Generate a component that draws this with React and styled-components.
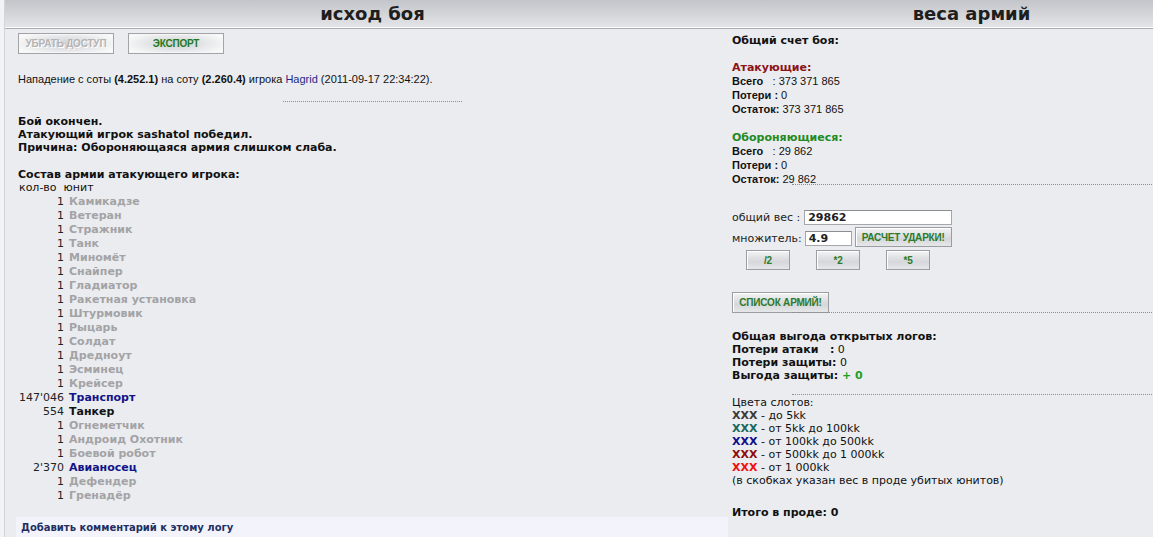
import React from "react";
import styled, { createGlobalStyle } from "styled-components";

const Global = createGlobalStyle`
  html, body { margin: 0; padding: 0; overflow: hidden; }
  body { background: #ebecef; width: 1153px; height: 537px; }
  #root { height: 537px; }
`;

const verdana = `"DejaVu Sans", Verdana, sans-serif`;
const arial = `"Liberation Sans", Arial, sans-serif`;

const Page = styled.div`
  display: flex;
  height: 537px;
  width: 1210px;
`;

const Strip = styled.div`
  width: 4px;
  flex: none;
  background: #f3f3f7;
  border-right: 1px solid #d4d5db;
`;

const Main = styled.div`
  flex: 1;
  display: flex;
  flex-direction: column;
`;

const HeaderRow = styled.div`
  display: grid;
  grid-template-columns: 735px 463px;
  height: 27px;
  background: linear-gradient(#c3c5ca, #e3e4e7);
  border-bottom: 1px solid #ffffff;
  box-shadow: 0 1px 0 #a9abb1;
`;

const HeaderCell = styled.div`
  font-family: ${verdana};
  font-weight: bold;
  font-size: 18px;
  color: #1e1e1e;
  text-align: center;
  line-height: 27px;
`;

const Body = styled.div`
  flex: 1;
  display: grid;
  grid-template-columns: 712px 471px;
  column-gap: 4px;
  padding-left: 11px;
  padding-top: 2px;
`;

const Column = styled.div`
  display: flex;
  flex-direction: column;
`;

const ButtonRow = styled.div`
  display: flex;
  gap: ${(p) => p.$gap || 14}px;
  margin: ${(p) => p.$margin || "0"};
  align-items: center;
`;

const Btn = styled.button`
  width: ${(p) => p.$w}px;
  height: ${(p) => p.$h || 21}px;
  padding: 0;
  border: 1px solid #a3a4a8;
  background: radial-gradient(ellipse 60% 70% at center, #cfd0d3 0%, #e2e3e5 45%, #fbfbfb 100%);
  font-family: ${arial};
  font-weight: bold;
  font-size: 10px;
  letter-spacing: -0.2px;
  color: ${(p) => (p.disabled ? "#b4b4b4" : "#1f7a1f")};
  text-shadow: ${(p) => (p.disabled ? "1px 1px 0 #fff" : "none")};
  box-shadow: inset 0 0 0 1px #f6f6f6;
`;

const SmallBtn = styled(Btn)`
  background: linear-gradient(#f3f3f4, #d6d7da 60%, #e6e7e9);
  border: 1px solid #9b9da2;
  box-shadow: inset 1px 1px 0 #fff;
  color: #2b7a2b;
`;

const Line = styled.div`
  font-family: ${(p) => (p.$verdana ? verdana : arial)};
  font-size: 11px;
  line-height: ${(p) => p.$lh || 13}px;
  color: ${(p) => p.$color || "#111"};
  font-weight: ${(p) => (p.$bold ? "bold" : "normal")};
  margin-top: ${(p) => p.$mt || 0}px;
  margin-left: ${(p) => p.$ml || 0}px;
  white-space: pre;
`;

const B = styled.b`
  font-weight: bold;
  color: ${(p) => p.$color || "inherit"};
`;

const PlayerLink = styled.span`
  color: #1b2a85;
`;

const Dots = styled.div`
  border-top: 1px dotted #8c8d92;
  width: ${(p) => p.$w}px;
  margin-left: ${(p) => p.$ml}px;
  margin-top: ${(p) => p.$mt || 0}px;
  height: 0;
`;

const UnitTable = styled.div`
  display: grid;
  grid-template-columns: 46px auto;
  column-gap: 5px;
  margin-left: 2px;
  font-family: ${verdana};
  font-size: 11px;
  line-height: 14px;
`;

const Count = styled.span`
  text-align: right;
  color: #222;
`;

const UnitName = styled.span`
  font-weight: bold;
  color: ${(p) =>
    p.$kind === "blue" ? "#121487" : p.$kind === "black" ? "#111" : "#a3a3a6"};
`;

const CommentBar = styled.div`
  margin-top: 14px;
  background: #f3f4fb;
  height: 24px;
  padding-left: 5px;
  font-family: ${verdana};
  font-weight: bold;
  font-size: 10px;
  line-height: 21px;
  color: #1f2f62;
`;

const FieldRow = styled.div`
  display: flex;
  align-items: center;
  gap: ${(p) => p.$gap || 3}px;
  margin-top: ${(p) => p.$mt || 0}px;
  font-family: ${verdana};
  font-size: 11px;
  color: #222;
`;

const Input = styled.div`
  width: ${(p) => p.$w}px;
  height: 15px;
  box-sizing: border-box;
  background: #fff;
  border: 1px solid #a6a7ab;
  border-top-color: #8c8d91;
  font-family: ${verdana};
  font-weight: bold;
  font-size: 11px;
  line-height: 13px;
  padding-left: 3px;
  color: #222;
`;

const Tier = styled.b`
  font-family: ${verdana};
  font-weight: bold;
  color: ${(p) => p.$c};
`;

const units = [
  ["1", "Камикадзе"],
  ["1", "Ветеран"],
  ["1", "Стражник"],
  ["1", "Танк"],
  ["1", "Миномёт"],
  ["1", "Снайпер"],
  ["1", "Гладиатор"],
  ["1", "Ракетная установка"],
  ["1", "Штурмовик"],
  ["1", "Рыцарь"],
  ["1", "Солдат"],
  ["1", "Дредноут"],
  ["1", "Эсминец"],
  ["1", "Крейсер"],
  ["147'046", "Транспорт", "blue"],
  ["554", "Танкер", "black"],
  ["1", "Огнеметчик"],
  ["1", "Андроид Охотник"],
  ["1", "Боевой робот"],
  ["2'370", "Авианосец", "blue"],
  ["1", "Дефендер"],
  ["1", "Гренадёр"],
];

const tiers = [
  ["#3a3a3a", " - до 5kk"],
  ["#17695e", " - от 5kk до 100kk"],
  ["#10108a", " - от 100kk до 500kk"],
  ["#8e0c0c", " - от 500kk до 1 000kk"],
  ["#f01010", " - от 1 000kk"],
];

function SideScore({ title, color, total, left, mt }) {
  return (
    <>
      <Line $verdana $bold $lh={13} $mt={mt} $color={color}>
        {title}
      </Line>
      <Line $lh={14}>
        <B>Всего   </B>: {total}
      </Line>
      <Line $lh={14}>
        <B>Потери :</B> 0
      </Line>
      <Line $lh={14}>
        <B>Остаток:</B> {left}
      </Line>
    </>
  );
}

export default function App() {
  return (
    <>
      <Global />
      <Page>
        <Strip />
        <Main>
          <HeaderRow>
            <HeaderCell>исход боя</HeaderCell>
            <HeaderCell>веса армий</HeaderCell>
          </HeaderRow>
          <Body>
            <Column>
              <ButtonRow $margin="3px 0 0 2px">
                <Btn $w={96} disabled>УБРАТЬ ДОСТУП</Btn>
                <Btn $w={96}>ЭКСПОРТ</Btn>
              </ButtonRow>
              <Line $mt={19} $ml={2}>
                Нападение с соты <B>(4.252.1)</B> на соту <B>(2.260.4)</B> игрока{" "}
                <PlayerLink>Hagrid</PlayerLink> (2011-09-17 22:34:22).
              </Line>
              <Dots $w={179} $ml={267} $mt={15} />
              <Line $verdana $bold $mt={13} $ml={2}>
                Бой окончен.
              </Line>
              <Line $verdana $bold $ml={2}>
                Атакующий игрок sashatol победил.
              </Line>
              <Line $verdana $bold $ml={2}>
                Причина: Обороняющаяся армия слишком слаба.
              </Line>
              <Line $verdana $bold $mt={14} $ml={2}>
                Состав армии атакующего игрока:
              </Line>
              <Line $verdana $lh={14} $ml={3}>
                {"кол-во  юнит"}
              </Line>
              <UnitTable>
                {units.map(([n, name, kind], i) => (
                  <React.Fragment key={i}>
                    <Count>{n}</Count>
                    <UnitName $kind={kind}>{name}</UnitName>
                  </React.Fragment>
                ))}
              </UnitTable>
              <CommentBar>Добавить комментарий к этому логу</CommentBar>
            </Column>

            <Column>
              <Line $verdana $bold $lh={14} $mt={4}>
                Общий счет боя:
              </Line>
              <SideScore
                title="Атакующие:"
                color="#8a1417"
                total="373 371 865"
                left="373 371 865"
                mt={13}
              />
              <SideScore
                title="Обороняющиеся:"
                color="#238a23"
                total="29 862"
                left="29 862"
                mt={15}
              />
              <Dots $w={380} $ml={60} $mt={-2} />
              <FieldRow $mt={25} $gap={4}>
                общий вес :<Input $w={148}>29862</Input>
              </FieldRow>
              <FieldRow $mt={5} $gap={3}>
                множитель:
                <Input $w={47}>4.9</Input>
                <SmallBtn $w={97} $h={20} style={{ marginTop: -3 }}>
                  РАСЧЕТ УДАРКИ!
                </SmallBtn>
              </FieldRow>
              <ButtonRow $gap={26} $margin="3px 0 0 14px">
                <SmallBtn $w={44} $h={20}>/2</SmallBtn>
                <SmallBtn $w={44} $h={20}>*2</SmallBtn>
                <SmallBtn $w={44} $h={20}>*5</SmallBtn>
              </ButtonRow>
              <ButtonRow $margin="22px 0 0 0">
                <SmallBtn $w={97} $h={21}>СПИСОК АРМИЙ!</SmallBtn>
              </ButtonRow>
              <Dots $w={380} $ml={60} $mt={-1} />
              <Line $verdana $bold $mt={17}>
                Общая выгода открытых логов:
              </Line>
              <Line $verdana>
                <B>Потери атаки   :</B> 0
              </Line>
              <Line $verdana>
                <B>Потери защиты:</B> 0
              </Line>
              <Line $verdana $bold>
                Выгода защиты: <B $color="#22a022">+ 0</B>
              </Line>
              <Dots $w={380} $ml={60} $mt={12} />
              <Line $verdana $mt={1}>
                Цвета слотов:
              </Line>
              {tiers.map(([c, t], i) => (
                <Line $verdana key={i}>
                  <Tier $c={c}>XXX</Tier>
                  {t}
                </Line>
              ))}
              <Line $verdana>(в скобках указан вес в проде убитых юнитов)</Line>
              <Line $verdana $bold $mt={19}>
                Итого в проде: 0
              </Line>
            </Column>
          </Body>
        </Main>
      </Page>
    </>
  );
}
